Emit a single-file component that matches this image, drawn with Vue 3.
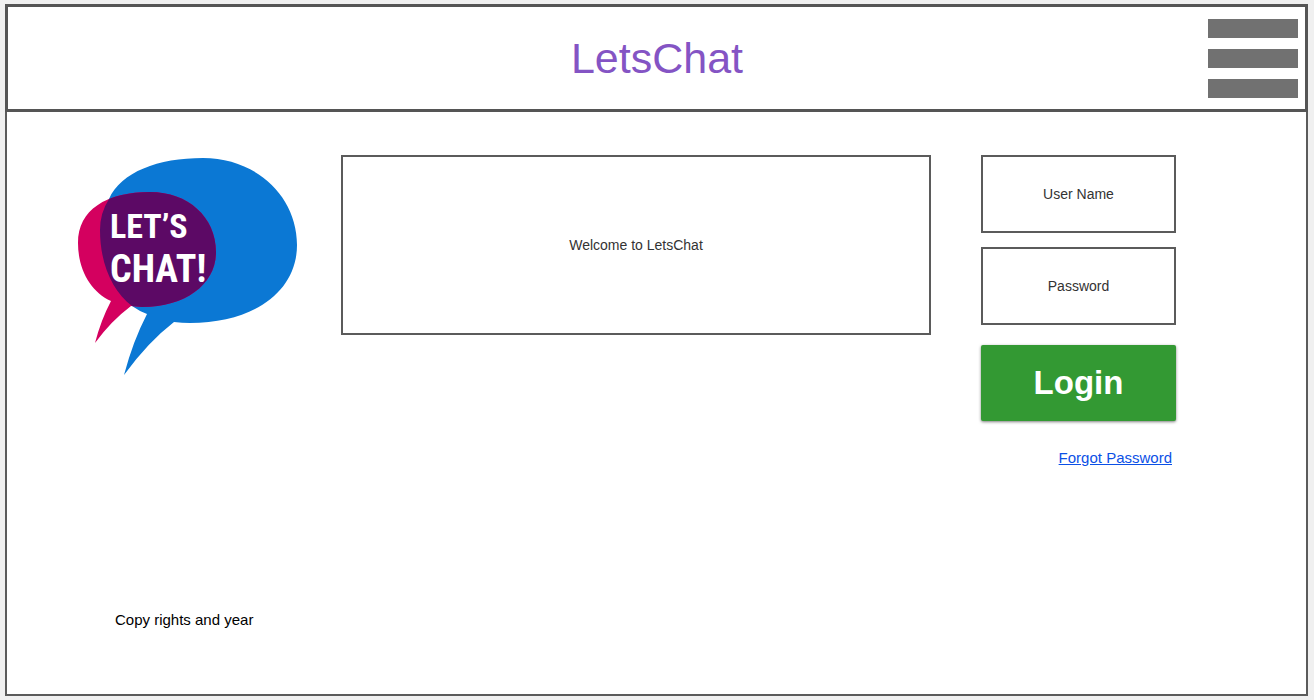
<script setup>
import { ref } from 'vue'

const userName = ref('')
const password = ref('')
</script>

<template>
  <div class="page">
    <header class="header">
      <h1 class="title">LetsChat</h1>
      <button class="menu" type="button" aria-label="Menu">
        <span class="bar"></span>
        <span class="bar"></span>
        <span class="bar"></span>
      </button>
    </header>

    <main class="main">
      <div class="content">
        <svg class="logo" viewBox="78 155 220 220" role="img" aria-label="Let's Chat!">
          <defs>
            <clipPath id="blue-bubble">
              <path d="M203 158C256 158 297 196 297 245C297 292 253 323 190 323Q182 323 174 322Q148 342 124 375Q133 341 147 314Q139 311 132 306C112 291 100 263 100 230Q100 213 109 199C121 172 158 158 203 158Z" />
            </clipPath>
          </defs>
          <path fill="#0b78d4" d="M203 158C256 158 297 196 297 245C297 292 253 323 190 323Q182 323 174 322Q148 342 124 375Q133 341 147 314Q139 311 132 306C112 291 100 263 100 230Q100 213 109 199C121 172 158 158 203 158Z" />
          <path fill="#d4005f" d="M150 192C188 192 216 217 216 252C216 284 186 307 142 307L131 306Q111 321 95 343Q101 320 111 301C91 292 78 270 78 243C78 210 106 192 150 192Z" />
          <path fill="#5c0965" clip-path="url(#blue-bubble)" d="M150 192C188 192 216 217 216 252C216 284 186 307 142 307L131 306Q111 321 95 343Q101 320 111 301C91 292 78 270 78 243C78 210 106 192 150 192Z" />
          <text class="logo-text logo-top" x="110" y="238">LET’S</text>
          <text class="logo-text logo-bottom" x="110" y="282">CHAT!</text>
        </svg>

        <section class="welcome">Welcome to LetsChat</section>

        <form class="login" @submit.prevent>
          <input v-model="userName" class="field" type="text" placeholder="User Name" aria-label="User Name" />
          <input v-model="password" class="field" type="password" placeholder="Password" aria-label="Password" />
          <button class="submit" type="submit">Login</button>
          <a class="forgot" href="#">Forgot Password</a>
        </form>
      </div>

      <footer class="footer">Copy rights and year</footer>
    </main>
  </div>
</template>

<style>
body {
  margin: 0;
  background: #f0f0f0;
}
</style>

<style scoped>
.page {
  box-sizing: border-box;
  min-height: 100vh;
  padding: 4px 6px 4px 5px;
  display: flex;
  flex-direction: column;
  background: #f0f0f0;
  font-family: "Liberation Sans", Arial, sans-serif;
}

.header {
  display: grid;
  grid-template-columns: 1fr auto 1fr;
  align-items: start;
  padding: 12px 7px 11px 8px;
  border: 3px solid #555;
  background: #fff;
}

.title {
  grid-column: 2;
  margin: 0;
  padding-top: 14px;
  font-size: 43px;
  line-height: 50px;
  font-weight: 400;
  color: #8454c4;
}

.menu {
  justify-self: end;
  display: flex;
  flex-direction: column;
  gap: 11px;
  width: 90px;
  padding: 0;
  border: 0;
  background: none;
  cursor: pointer;
}

.bar {
  width: 100%;
  height: 19px;
  background: #717171;
}

.main {
  flex: 1;
  display: flex;
  flex-direction: column;
  justify-content: space-between;
  border: 2px solid #5b5b5b;
  border-top: 0;
  background: #fff;
}

.content {
  display: flex;
  align-items: flex-start;
  padding: 43px 130px 0 71px;
}

.logo {
  flex: none;
  width: 220px;
  height: 220px;
  margin-right: 43px;
}

.logo-text {
  fill: #fff;
  font-family: "Roboto Condensed", "Liberation Sans Narrow", "DejaVu Sans Condensed", sans-serif;
  font-weight: 700;
}

.logo-top {
  font-size: 34px;
}

.logo-bottom {
  font-size: 38px;
}

.welcome {
  box-sizing: border-box;
  flex: 1;
  display: flex;
  align-items: center;
  justify-content: center;
  min-height: 180px;
  border: 2px solid #5b5b5b;
  font-size: 14px;
  color: #333;
}

.login {
  flex: none;
  display: flex;
  flex-direction: column;
  width: 195px;
  margin-left: 50px;
}

.field {
  box-sizing: border-box;
  width: 100%;
  height: 78px;
  margin: 0 0 14px;
  padding: 0 12px;
  border: 2px solid #5b5b5b;
  border-radius: 0;
  background: #fff;
  font-family: inherit;
  font-size: 14px;
  text-align: center;
  color: #333;
}

.field::placeholder {
  color: #333;
  opacity: 1;
}

.submit {
  height: 76px;
  margin-top: 6px;
  padding: 0;
  border: 0;
  border-radius: 2px;
  background: #339933;
  box-shadow: 0 1px 3px rgba(0, 0, 0, 0.5);
  font-family: inherit;
  font-size: 33px;
  font-weight: 700;
  color: #fff;
  cursor: pointer;
}

.forgot {
  align-self: flex-end;
  margin: 28px 4px 0 0;
  font-size: 15px;
  line-height: 18px;
  color: #0b50e6;
}

.footer {
  padding: 0 108px 64px;
  font-size: 15px;
  line-height: 20px;
  color: #000;
}
</style>
